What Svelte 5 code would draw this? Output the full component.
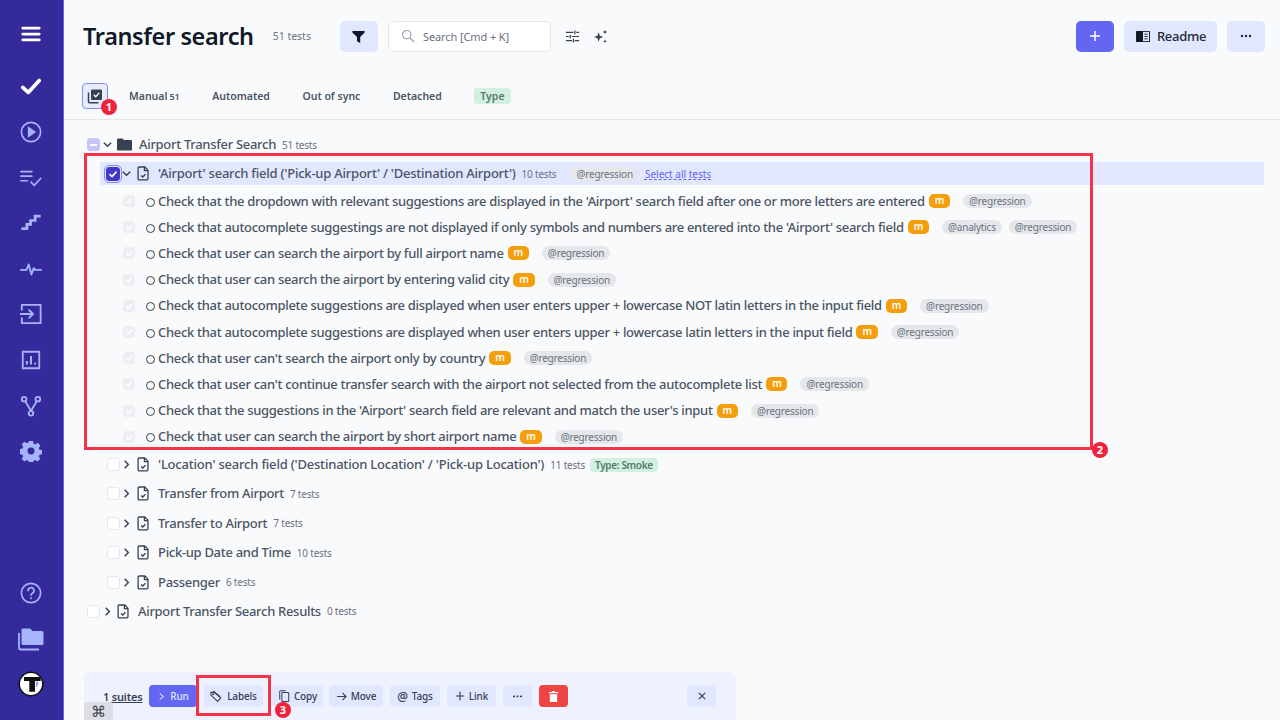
<script>
  const tests = [
    { name: "Check that the dropdown with relevant suggestions are displayed in the 'Airport' search field after one or more letters are entered", tags: ['@regression'] },
    { name: "Check that autocomplete suggestings are not displayed if only symbols and numbers are entered into the 'Airport' search field", tags: ['@analytics', '@regression'] },
    { name: 'Check that user can search the airport by full airport name', tags: ['@regression'] },
    { name: 'Check that user can search the airport by entering valid city', tags: ['@regression'] },
    { name: 'Check that autocomplete suggestions are displayed when user enters upper + lowercase NOT latin letters in the input field', tags: ['@regression'] },
    { name: 'Check that autocomplete suggestions are displayed when user enters upper + lowercase latin letters in the input field', tags: ['@regression'] },
    { name: "Check that user can't search the airport only by country", tags: ['@regression'] },
    { name: "Check that user can't continue transfer search with the airport not selected from the autocomplete list", tags: ['@regression'] },
    { name: "Check that the suggestions in the 'Airport' search field are relevant and match the user's input", tags: ['@regression'] },
    { name: 'Check that user can search the airport by short airport name', tags: ['@regression'] }
  ];

  const suites = [
    { name: "'Location' search field ('Destination Location' / 'Pick-up Location')", count: '11 tests', label: 'Type: Smoke' },
    { name: 'Transfer from Airport', count: '7 tests' },
    { name: 'Transfer to Airport', count: '7 tests' },
    { name: 'Pick-up Date and Time', count: '10 tests' },
    { name: 'Passenger', count: '6 tests' }
  ];

  const tabs = [
    { name: 'Manual', count: '51' },
    { name: 'Automated' },
    { name: 'Out of sync' },
    { name: 'Detached' }
  ];
</script>

{#snippet chevronDown()}
  <svg class="chev" viewBox="0 0 12 12" fill="none" stroke="currentColor" stroke-width="1.6"><path d="M2 4l4 4 4-4" /></svg>
{/snippet}

{#snippet chevronRight()}
  <svg class="chev" viewBox="0 0 12 12" fill="none" stroke="currentColor" stroke-width="1.6"><path d="M4 2l4 4-4 4" /></svg>
{/snippet}

{#snippet fileCheck()}
  <svg class="file" viewBox="0 0 14 16" fill="none" stroke="currentColor" stroke-width="1.4"><path d="M2.400 1h6l3.400 3.400v9.200a1.200 1.200 0 0 1-1.200 1.200H2.400a1.200 1.200 0 0 1-1.200-1.200V2.200A1.200 1.200 0 0 1 2.400 1z" /><path d="M8 1v4h3.800" /><path d="M4.400 10.200l1.700 1.600 3-3" /></svg>
{/snippet}

<div class="app">
  <nav class="sidebar">
    <div class="nav-item menu">
      <svg viewBox="0 0 24 24" fill="none" stroke="#fff" stroke-width="3" stroke-linecap="round"><path d="M3 5.500h18M3 12h18M3 18.500h18" /></svg>
    </div>
    <div class="nav-item active">
      <svg viewBox="0 0 24 24" fill="none" stroke="#fff" stroke-width="4" stroke-linecap="round" stroke-linejoin="round"><path d="M3 13.500l6 5.500L21 6" /></svg>
    </div>
    <div class="nav-item">
      <svg viewBox="0 0 24 24" fill="none" stroke="currentColor" stroke-width="1.800"><circle cx="12" cy="12" r="10.500" /><path d="M9.500 7.500l6.500 4.500-6.500 4.500z" fill="currentColor" /></svg>
    </div>
    <div class="nav-item">
      <svg viewBox="0 0 24 24" fill="none" stroke="currentColor" stroke-width="1.800" stroke-linecap="round" stroke-linejoin="round"><path d="M1 5h12M1 10h12M1 15h7M12 16.500l3.500 3.500 7-7.500" /></svg>
    </div>
    <div class="nav-item">
      <svg viewBox="0 0 24 24" fill="currentColor"><path d="M15 3h7.500v3H18v4.500h-5v4.500H9v4.500H1.500v-3H6v-4.500h4V8h5z" /></svg>
    </div>
    <div class="nav-item">
      <svg viewBox="0 0 24 24" fill="none" stroke="currentColor" stroke-width="2" stroke-linecap="round" stroke-linejoin="round"><path d="M1 13h6l2.500-6 3 11 2.500-7 1.500 2H23" /></svg>
    </div>
    <div class="nav-item">
      <svg viewBox="0 0 24 24" fill="none" stroke="currentColor" stroke-width="2" stroke-linejoin="round" stroke-linecap="round"><path d="M2 7.500V2h20.500v20H2v-5.500" /><path d="M0.500 12h13.500M10 7.800l4.200 4.200-4.200 4.200" /></svg>
    </div>
    <div class="nav-item">
      <svg viewBox="0 0 24 24" fill="none" stroke="currentColor" stroke-width="2"><path d="M3 3h18v18H3z" /><path d="M7.500 17v-4M12 17V7.500M16.500 17v-2" stroke-width="2.200" /></svg>
    </div>
    <div class="nav-item">
      <svg viewBox="0 0 24 24" fill="none" stroke="currentColor" stroke-width="2"><circle cx="4.500" cy="4.500" r="2.500" /><circle cx="19.500" cy="4.500" r="2.500" /><circle cx="12" cy="20" r="2.500" /><path d="M5.700 6.700L12 17.500M18.300 6.700L12 17.500" /></svg>
    </div>
    <div class="nav-item">
      <svg viewBox="0 0 24 24" fill="currentColor"><path fill-rule="evenodd" d="M9.800 1h4.400l.6 3 1.800.8 2.600-1.700 3 3-1.700 2.600.8 1.800 3 .6v4.400l-3 .6-.8 1.800 1.700 2.600-3 3-2.600-1.700-1.800.8-.6 3H9.800l-.6-3-1.800-.8-2.600 1.700-3-3 1.700-2.600-.8-1.800-3-.6V9.800l3-.6.8-1.800-1.700-2.600 3-3 2.600 1.700 1.800-.8zM12 8.200a3.800 3.800 0 1 0 0 7.600 3.800 3.800 0 0 0 0-7.600z" /></svg>
    </div>

    <div class="spacer"></div>

    <div class="nav-item">
      <svg viewBox="0 0 24 24" fill="none" stroke="currentColor" stroke-width="1.800" stroke-linecap="round"><circle cx="12" cy="12" r="10.500" /><path d="M8.800 9.500a3.200 3.200 0 1 1 4.800 2.700c-1 .6-1.600 1.200-1.600 2.300" /><path d="M12 17.600v.1" stroke-width="2.200" /></svg>
    </div>
    <div class="nav-item">
      <svg class="wide" viewBox="0 0 26 24" fill="currentColor"><path d="M5 1.500h7l2.500 2.500H24a1.500 1.500 0 0 1 1.500 1.500v11a1.500 1.500 0 0 1-1.500 1.500H5a1.500 1.500 0 0 1-1.500-1.500V3A1.500 1.500 0 0 1 5 1.500z" /><path d="M1 6v14.500A2 2 0 0 0 3 22.500h18" fill="none" stroke="currentColor" stroke-width="1.800" /></svg>
    </div>
    <div class="nav-item logo">
      <svg viewBox="0 0 26 26"><circle cx="13" cy="13" r="11.800" fill="#fff" stroke="#111" stroke-width="1.500" /><path d="M6 6h16.700v4h-5.700v10.700h-5.700V10H6z" fill="#111" /><path d="M18 10.400h2.300v3.300L18 16.500z" fill="#8fa4f5" /></svg>
    </div>
  </nav>

  <main class="main">
    <header class="topbar">
      <h1>Transfer search</h1>
      <span class="title-count">51 tests</span>
      <button class="btn soft filter" aria-label="Filter">
        <svg viewBox="0 0 16 16" width="15" height="15" fill="#111827"><path d="M1.500 2h13v1.800L9.800 8.500V15l-3.400-2V8.500L1.500 3.800z" /></svg>
      </button>
      <div class="search">
        <svg viewBox="0 0 16 16" width="14" height="14" fill="none" stroke="#9ca3af" stroke-width="1.400"><circle cx="6.500" cy="6.500" r="4.800" /><path d="M10 10l4.800 4.800" /></svg>
        <span>Search [Cmd + K]</span>
      </div>
      <svg class="tool" viewBox="0 0 16 16" fill="none" stroke="#374151" stroke-width="1.300"><path d="M1 3.500h8M12 3.500h3M1 8h3M7 8h8M1 12.500h6.500M10.500 12.500H15M10.500 1.500v4M5.500 6v4M9 10.500v4" /></svg>
      <svg class="tool sparkle" viewBox="0 0 16 16" fill="#374151"><path d="M6 3.500l1.300 3.700L11 8.500 7.300 9.800 6 13.500 4.700 9.800 1 8.500l3.700-1.300zM12.800 1l.7 1.500 1.500.7-1.500.7-.7 1.500-.7-1.500-1.500-.7 1.500-.7zM12.800 11l.6 1.400 1.400.6-1.400.6-.6 1.400-.6-1.400-1.400-.6 1.400-.6z" /></svg>
      <div class="spacer"></div>
      <button class="btn primary plus" aria-label="Add">
        <svg viewBox="0 0 12 12" width="12" height="12" stroke="#fff" stroke-width="1.500"><path d="M6 1v10M1 6h10" /></svg>
      </button>
      <button class="btn soft readme">
        <svg viewBox="0 0 16 14" width="16" height="13"><rect x="0.500" y="1" width="15" height="12" rx="1" fill="#111827" /><rect x="8" y="2" width="6.500" height="10" fill="#e0e7ff" /><path d="M9.500 4.500h3.500M9.500 7h3.500M9.500 9.500h3.500" stroke="#111827" /></svg>
        Readme
      </button>
      <button class="btn soft dots" aria-label="More">
        <svg viewBox="0 0 12 4" width="12" height="4" fill="#1f2937"><circle cx="2" cy="2" r="1.200" /><circle cx="6" cy="2" r="1.200" /><circle cx="10" cy="2" r="1.200" /></svg>
      </button>
    </header>

    <div class="tabs">
      <div class="select-toggle">
        <svg viewBox="0 0 16 16" width="16" height="16" fill="none"><path d="M1.500 4.500v9.200a1 1 0 0 0 1 1h9" stroke="#374151" stroke-width="1.500" /><rect x="4" y="1.500" width="11" height="10.500" rx="1.200" fill="#374151" /><path d="M6.800 6.800l1.900 1.900 3.600-3.800" stroke="#fff" stroke-width="1.300" /></svg>
      </div>
      {#each tabs as tab}
        <span class="tab">{tab.name}{#if tab.count}<small>{tab.count}</small>{/if}</span>
      {/each}
      <span class="tab type-pill">Type</span>
    </div>

    <section class="tree">
      <div class="row root">
        <span class="box indeterminate"></span>
        {@render chevronDown()}
        <svg class="folder" viewBox="0 0 16 13" fill="#374151"><path d="M1.300 0h4.500l1.700 1.800h7.200a1.300 1.300 0 0 1 1.300 1.300v8.600a1.300 1.300 0 0 1-1.300 1.300H1.300A1.300 1.300 0 0 1 0 11.700V1.300A1.300 1.300 0 0 1 1.300 0z" /></svg>
        <span class="name">Airport Transfer Search</span>
        <span class="count">51 tests</span>
      </div>

      <div class="row suite selected">
        <span class="box checked"><svg viewBox="0 0 12 12" fill="none" stroke="#fff" stroke-width="1.700"><path d="M2.500 6.200l2.500 2.400 4.500-5" /></svg></span>
        {@render chevronDown()}
        {@render fileCheck()}
        <span class="name">'Airport' search field ('Pick-up Airport' / 'Destination Airport')</span>
        <span class="count">10 tests</span>
        <span class="tag first">@regression</span>
        <span class="select-all">Select all tests</span>
      </div>

      {#each tests as test}
        <div class="row test">
          <span class="box ghost"><svg viewBox="0 0 12 12" fill="none" stroke="#fff" stroke-width="1.600"><path d="M2.500 6.200l2.500 2.400 4.500-5" /></svg></span>
          <span class="dot"></span>
          <span class="name">{test.name}</span>
          <span class="m">m</span>
          <span class="tags">
            {#each test.tags as tag}
              <span class="tag">{tag}</span>
            {/each}
          </span>
        </div>
      {/each}

      {#each suites as suite}
        <div class="row suite closed" class:labelled={suite.label}>
          <span class="box"></span>
          {@render chevronRight()}
          {@render fileCheck()}
          <span class="name">{suite.name}</span>
          <span class="count">{suite.count}</span>
          {#if suite.label}<span class="label">{suite.label}</span>{/if}
        </div>
      {/each}

      <div class="row root closed-root">
        <span class="box"></span>
        {@render chevronRight()}
        {@render fileCheck()}
        <span class="name">Airport Transfer Search Results</span>
        <span class="count">0 tests</span>
      </div>
    </section>

    <footer class="bulk">
      <span class="suites-count">1 suites</span>
      <button class="mini run">
        <svg viewBox="0 0 10 10" width="9" height="9" fill="none" stroke="#c7d2fe" stroke-width="1.300"><path d="M3 1.500L7 5 3 8.500" /></svg>
        Run
      </button>
      <button class="mini labels">
        <svg viewBox="0 0 14 14" width="13" height="13" fill="none" stroke="#374151" stroke-width="1.200" stroke-linejoin="round"><path d="M1 5.500V2.500h3.500l7 6-3.300 3.800z" /><path d="M3.500 1l7.500 6.300" /><circle cx="3.400" cy="4.600" r=".5" /></svg>
        Labels
      </button>
      <button class="mini copy">
        <svg viewBox="0 0 14 14" width="12" height="12" fill="none" stroke="#374151" stroke-width="1.200"><rect x="4.500" y="3" width="8" height="10.500" rx="1" /><path d="M2 11V2a1 1 0 0 1 1-1h6" /></svg>
        Copy
      </button>
      <button class="mini move">
        <svg viewBox="0 0 12 12" width="11" height="11" fill="none" stroke="#374151" stroke-width="1.200"><path d="M1 6h10M7 2l4 4-4 4" /></svg>
        Move
      </button>
      <button class="mini tags-btn"><span class="at">@</span> Tags</button>
      <button class="mini link">
        <svg viewBox="0 0 12 12" width="10" height="10" stroke="#374151" stroke-width="1.400"><path d="M6 1v10M1 6h10" /></svg>
        Link
      </button>
      <button class="mini square" aria-label="More">
        <svg viewBox="0 0 10 3" width="9" height="3" fill="#374151"><rect x="0" y="0.500" width="2.200" height="1.800" /><rect x="3.900" y="0.500" width="2.200" height="1.800" /><rect x="7.800" y="0.500" width="2.200" height="1.800" /></svg>
      </button>
      <button class="mini square danger" aria-label="Delete">
        <svg viewBox="0 0 12 12" width="11" height="11" fill="#fff"><path d="M4.500 0h3v1H11v1.500H1V1h3.500zM2 3.500h8V12H2z" /></svg>
      </button>
      <div class="spacer"></div>
      <button class="mini square" aria-label="Close">
        <svg viewBox="0 0 10 10" width="8" height="8" stroke="#374151" stroke-width="1.500"><path d="M1 1l8 8M9 1l-8 8" /></svg>
      </button>
    </footer>

    <span class="shortcut" aria-hidden="true">⌘</span>
  </main>

  <!-- tutorial annotations drawn over the screenshot -->
  <div class="mark mark-suite"></div>
  <div class="mark mark-labels"></div>
  <span class="pin pin-1">1</span>
  <span class="pin pin-2">2</span>
  <span class="pin pin-3">3</span>
</div>

<style>
  :global(body) {
    margin: 0;
    background: #f9fafc;
  }
  .app {
    position: relative;
    display: flex;
    width: 1280px;
    height: 720px;
    overflow: hidden;
    font-family: 'Noto Sans', 'Open Sans', sans-serif;
    color: #4b5563;
    background: #f9fafc;
  }
  .spacer {
    flex: 1;
  }

  .sidebar {
    display: flex;
    flex-direction: column;
    align-items: center;
    flex: none;
    box-sizing: border-box;
    width: 64px;
    padding: 11px 1px 13px 0;
    background: #352a9b;
    border-right: 1px solid #6366f1;
    color: #a5b4fc;
  }
  .nav-item {
    display: flex;
    align-items: center;
    justify-content: center;
    width: 100%;
    height: 45.600px;
    flex: none;
  }
  .nav-item svg {
    width: 22px;
    height: 22px;
  }
  .nav-item .wide {
    width: 26px;
    height: 24px;
  }
  .nav-item.menu {
    margin-bottom: 7px;
  }
  .nav-item.logo svg {
    width: 26px;
    height: 26px;
  }

  .main {
    position: relative;
    display: flex;
    flex-direction: column;
    flex: 1;
    min-width: 0;
  }

  .topbar {
    display: flex;
    align-items: center;
    box-sizing: border-box;
    height: 72px;
    padding: 0 15px 0 19px;
    flex: none;
  }
  h1 {
    margin: 0;
    font-size: 23.500px;
    font-weight: 600;
    letter-spacing: -0.4px;
    color: #111827;
    line-height: 30px;
  }
  .title-count {
    margin-left: 19px;
    font-size: 10.500px;
    color: #6b7280;
  }
  .btn {
    display: flex;
    align-items: center;
    justify-content: center;
    height: 31px;
    padding: 0;
    border: 0;
    border-radius: 5px;
    font-family: inherit;
  }
  .soft {
    background: #e0e7ff;
  }
  .primary {
    background: #6366f1;
  }
  .filter {
    width: 38px;
    margin-left: 29px;
  }
  .search {
    display: flex;
    align-items: center;
    gap: 8px;
    box-sizing: border-box;
    width: 163px;
    height: 31px;
    margin-left: 10px;
    padding-left: 12px;
    background: #fff;
    border: 1px solid #e5e7eb;
    border-radius: 5px;
    font-size: 11px;
    letter-spacing: -0.1px;
    color: #6b7280;
  }
  .tool {
    width: 15px;
    height: 15px;
    margin-left: 14px;
  }
  .tool.sparkle {
    margin-left: 13px;
  }
  .plus {
    width: 38px;
  }
  .readme {
    gap: 6px;
    width: 93px;
    margin-left: 10px;
    font-size: 13px;
    font-weight: 500;
    letter-spacing: -0.3px;
    color: #1f2937;
  }
  .dots {
    width: 38px;
    margin-left: 10px;
  }

  .tabs {
    display: flex;
    align-items: center;
    box-sizing: border-box;
    height: 48px;
    padding: 0 0 0 18px;
    border-bottom: 1px solid #e5e7eb;
    flex: none;
  }
  .select-toggle {
    display: flex;
    align-items: center;
    justify-content: center;
    box-sizing: border-box;
    width: 26px;
    height: 26px;
    margin-right: 21px;
    background: #e8ecff;
    border: 1.500px solid #818cf8;
    border-radius: 4px;
  }
  .tab {
    margin-right: 32.500px;
    font-size: 10.500px;
    font-weight: 600;
    color: #4b5563;
  }
  .tab small {
    margin-left: 2px;
    font-size: 9px;
  }
  .type-pill {
    padding: 1px 6px;
    background: #d1f0e0;
    border-radius: 4px;
    color: #5b7a6b;
  }

  .tree {
    flex: 1;
    padding-top: 10px;
  }
  .row {
    display: flex;
    align-items: center;
    white-space: nowrap;
  }
  .name {
    position: relative;
    top: -0.5px;
    font-size: 13px;
    font-weight: 500;
    letter-spacing: -0.305px;
    color: #4b5563;
  }
  .count {
    margin-left: 6px;
    font-size: 10px;
    letter-spacing: -0.2px;
    color: #6b7280;
  }
  .box {
    display: flex;
    align-items: center;
    justify-content: center;
    box-sizing: border-box;
    width: 13px;
    height: 13px;
    flex: none;
    background: #fff;
    border: 1px solid #e5e7eb;
    border-radius: 3px;
  }
  .box svg {
    width: 12px;
    height: 12px;
  }
  .chev {
    width: 11px;
    height: 11px;
    flex: none;
    color: #374151;
  }
  .file {
    width: 13px;
    height: 15px;
    flex: none;
    color: #374151;
  }

  .root {
    height: 29px;
    padding-left: 23px;
  }
  .root .chev {
    margin-left: 2px;
  }
  .root .folder {
    width: 15px;
    height: 13px;
    margin-left: 4px;
  }
  .root .name {
    margin-left: 7px;
  }
  .root .file {
    margin-left: 4px;
  }
  .root.closed-root .name {
    margin-left: 8px;
  }
  .indeterminate {
    background: #c7c4fa;
    border-color: #c7c4fa;
  }
  .indeterminate::after {
    content: '';
    width: 7px;
    height: 2px;
    background: #fff;
  }

  .suite {
    height: 29.400px;
    padding-left: 43px;
  }
  .suite .chev {
    margin-left: 1px;
  }
  .suite .file {
    margin-left: 5px;
  }
  .suite .name {
    margin-left: 8px;
  }
  .suite.selected {
    box-sizing: border-box;
    height: 23px;
    margin: 3px 16px 3px 36px;
    padding-left: 6px;
    background: #e0e7ff;
  }
  .selected .chev {
    margin-left: 1px;
  }
  .selected .name {
    letter-spacing: -0.23px;
  }
  .labelled .name {
    letter-spacing: -0.205px;
  }
  .checked {
    width: 14px;
    height: 14px;
    background: #4338ca;
    border-color: #4338ca;
    outline: 1.500px solid #818cf8;
    outline-offset: 1px;
  }
  .tag {
    padding: 0 6px;
    height: 14px;
    line-height: 14px;
    background: #e5e7eb;
    border-radius: 7px;
    font-size: 10px;
    letter-spacing: -0.2px;
    color: #6b7280;
  }
  .tag.first {
    margin-left: 14px;
  }
  .select-all {
    margin-left: 6px;
    font-size: 10px;
    color: #6366f1;
    text-decoration: underline dashed;
  }

  .test {
    height: 26.200px;
    padding-left: 59px;
  }
  .ghost {
    width: 12px;
    height: 12px;
    background: #eceef1;
    border-color: #eceef1;
  }
  .dot {
    box-sizing: border-box;
    width: 9px;
    height: 9px;
    margin: 2px 3px 0 11px;
    flex: none;
    border: 1px solid #374151;
    border-radius: 50%;
  }
  .m {
    margin-left: 4px;
    padding: 0 6px;
    height: 14px;
    line-height: 13px;
    background: #f59e0b;
    border-radius: 5px;
    font-size: 10px;
    font-weight: 600;
    letter-spacing: -0.3px;
    color: #fff;
  }
  .tags {
    display: flex;
    gap: 7px;
    margin-left: 13px;
  }
  .label {
    margin-left: 5px;
    padding: 0 5px;
    height: 14px;
    line-height: 14px;
    background: #d1f0e0;
    border-radius: 4px;
    font-size: 10px;
    font-weight: 600;
    letter-spacing: -0.35px;
    color: #5b7a6b;
  }

  .bulk {
    display: flex;
    align-items: center;
    gap: 7px;
    box-sizing: border-box;
    flex: none;
    width: 652px;
    height: 48px;
    margin-left: 20px;
    padding: 0 20px 0 19px;
    background: #eef2fe;
    border-radius: 6px 6px 0 0;
  }
  .suites-count {
    flex: none;
    width: 39px;
    font-size: 11px;
    font-weight: 600;
    letter-spacing: -0.2px;
    white-space: nowrap;
    color: #374151;
    text-decoration: underline;
  }
  .mini {
    display: flex;
    align-items: center;
    justify-content: center;
    gap: 4px;
    flex: none;
    height: 22px;
    padding: 0 4px;
    border: 0;
    border-radius: 4px;
    background: #e0e7ff;
    font-family: inherit;
    font-size: 10px;
    font-weight: 500;
    letter-spacing: -0.15px;
    color: #374151;
  }
  .run {
    width: 48px;
    background: #6366f1;
    color: #e0e7ff;
  }
  .labels {
    width: 59px;
  }
  .copy {
    width: 51px;
    margin-left: 2px;
  }
  .move {
    width: 54px;
    margin-left: -1px;
  }
  .tags-btn {
    width: 50px;
  }
  .link {
    width: 49px;
  }
  .at {
    font-size: 12px;
  }
  .square {
    width: 29px;
    padding: 0;
  }
  .danger {
    background: #ef4444;
  }
  .shortcut {
    position: absolute;
    left: 20px;
    bottom: 0;
    display: flex;
    align-items: center;
    justify-content: center;
    width: 29px;
    height: 18px;
    background: #dcdee3;
    border-radius: 3px 3px 0 0;
    font-size: 15px;
    line-height: 18px;
    color: #374151;
  }

  .mark {
    position: absolute;
    box-sizing: border-box;
    border: 3px solid #f43248;
  }
  .mark-suite {
    left: 84px;
    top: 153px;
    width: 1009px;
    height: 297px;
  }
  .mark-labels {
    left: 196px;
    top: 675px;
    width: 75px;
    height: 41px;
  }
  .pin {
    position: absolute;
    width: 16px;
    height: 16px;
    line-height: 16px;
    text-align: center;
    background: #ef233c;
    border-radius: 50%;
    font-size: 11px;
    font-weight: 700;
    color: #fff;
  }
  .pin-1 {
    left: 101px;
    top: 99px;
  }
  .pin-2 {
    left: 1092px;
    top: 442px;
  }
  .pin-3 {
    left: 275px;
    top: 702px;
  }
</style>
